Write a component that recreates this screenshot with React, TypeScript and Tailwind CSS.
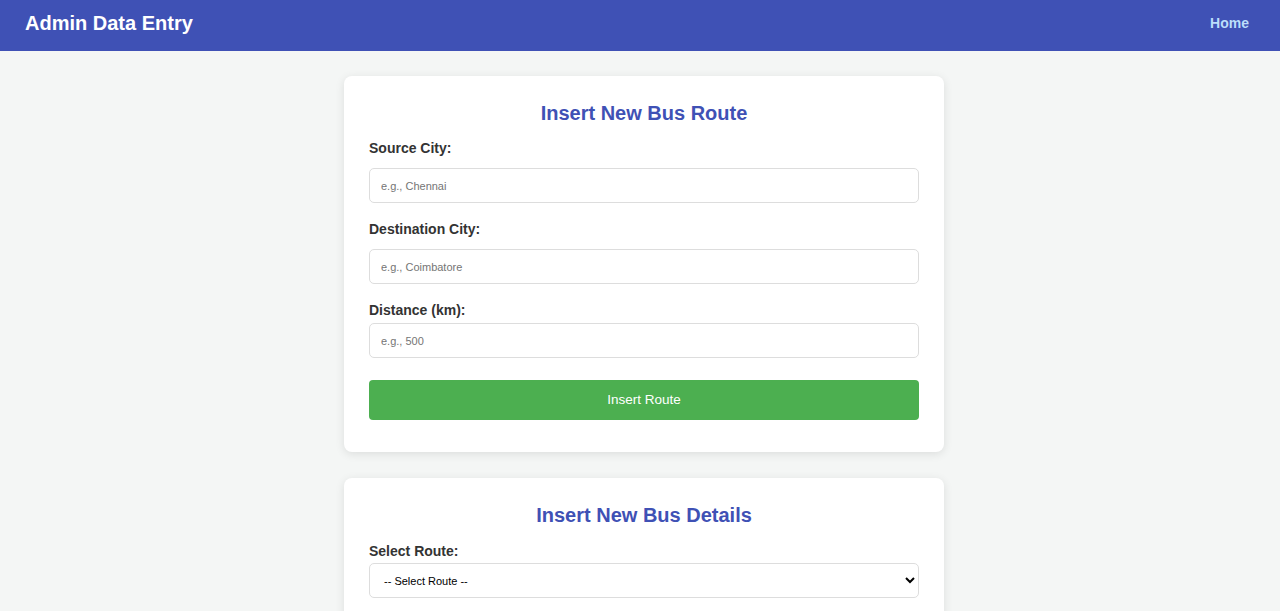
export default function App() {
  return (
    <div className="min-h-[611px] bg-[#f4f6f5] font-['Liberation_Sans',Arial,sans-serif] text-[#333]">
      {/* Header */}
      <header className="flex h-[51px] items-center justify-between bg-[#3f51b5] pb-[5px] pl-[25px] pr-[31px]">
        <h1 className="text-[20px] font-bold text-white">Admin Data Entry</h1>
        <a href="#" className="text-[14px] font-bold text-[#bbdefb]">
          Home
        </a>
      </header>

      <main className="flex flex-col items-center pt-[25px] pl-[8px]">
        {/* Route card */}
        <section className="w-[600px] rounded-[8px] bg-white px-[25px] pt-[26px] pb-[32px] shadow-[0_2px_10px_rgba(0,0,0,0.1)]">
          <h2 className="mb-[15px] text-center text-[20px] leading-[23px] font-bold text-[#3f51b5]">
            Insert New Bus Route
          </h2>
          <label className="block text-[14px] leading-[16px] font-bold">Source City:</label>
          <input
            placeholder="e.g., Chennai"
            className="mt-[12px] block h-[35px] w-full rounded-[5px] border border-[#ddd] px-[11px] text-[11px] placeholder:text-[#757575]"
          />
          <label className="mt-[18px] block text-[14px] leading-[16px] font-bold">Destination City:</label>
          <input
            placeholder="e.g., Coimbatore"
            className="mt-[12px] block h-[35px] w-full rounded-[5px] border border-[#ddd] px-[11px] text-[11px] placeholder:text-[#757575]"
          />
          <label className="mt-[18px] block text-[14px] leading-[16px] font-bold">Distance (km):</label>
          <input
            placeholder="e.g., 500"
            className="mt-[5px] block h-[35px] w-full rounded-[5px] border border-[#ddd] px-[11px] text-[11px] placeholder:text-[#757575]"
          />
          <button className="mt-[22px] block h-[40px] w-full rounded-[4px] bg-[#4caf50] text-[13.5px] text-white">
            Insert Route
          </button>
        </section>

        {/* Bus card */}
        <section className="mt-[26px] w-[600px] rounded-[8px] bg-white px-[25px] pt-[26px] pb-[32px] shadow-[0_2px_10px_rgba(0,0,0,0.1)]">
          <h2 className="mb-[16px] text-center text-[20px] leading-[23px] font-bold text-[#3f51b5]">
            Insert New Bus Details
          </h2>
          <label className="block text-[14px] leading-[16px] font-bold">Select Route:</label>
          <select className="mt-[4px] block h-[35px] w-full rounded-[5px] border border-[#ddd] bg-white px-[10px] text-[11px] text-black">
            <option>-- Select Route --</option>
          </select>
          <div className="h-[40px]" />
        </section>
      </main>
    </div>
  );
}
